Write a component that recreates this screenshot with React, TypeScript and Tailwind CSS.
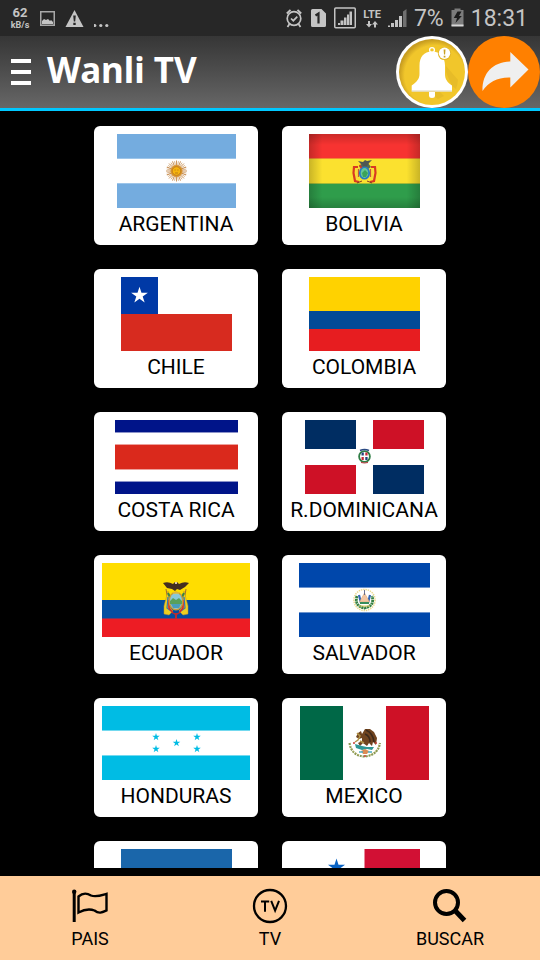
import type { ReactNode } from "react";

type Country = { name: string; width: number; flag: ReactNode };

const starPath =
  "M0 -10 L2.25 -3.09 L9.51 -3.09 L3.63 1.18 L5.88 8.09 L0 3.82 L-5.88 8.09 L-3.63 1.18 L-9.51 -3.09 L-2.25 -3.09 Z";

function Star({ x, y, r, fill }: { x: number; y: number; r: number; fill: string }) {
  return <path d={starPath} fill={fill} transform={`translate(${x} ${y}) scale(${r / 10})`} />;
}

function Triband({ w, color, edge }: { w: number; color: string; edge: string }) {
  return (
    <>
      <rect width={w} height="74" fill="#fff" />
      <rect width={w} height="25" fill={edge} />
      <rect width={w} height="24" fill={color} />
      <rect y="49" width={w} height="25" fill={edge} />
      <rect y="50" width={w} height="24" fill={color} />
    </>
  );
}

const rays = Array.from({ length: 32 }, (_, i) => i * 11.25);

const countries: Country[] = [
  {
    name: "ARGENTINA",
    width: 119,
    flag: (
      <>
        <Triband w={119} color="#74acdf" edge="#9cc5ea" />
        {rays.map((a, i) => (
          <path
            key={a}
            d={i % 2 ? "M0 -4 L0 -10" : "M0 -4 L0 -10.5"}
            stroke={i % 2 ? "#d9b48a" : "#c68a4c"}
            strokeWidth="0.9"
            transform={`translate(59.5 37) rotate(${a})`}
          />
        ))}
        <circle cx="59.5" cy="37" r="6" fill="#d9962f" />
        <circle cx="59.5" cy="37" r="4.3" fill="#f6b40e" stroke="#b5701c" strokeWidth="0.7" />
        <path d="M57.5 36h1.2M60.3 36h1.2M58 39h3" stroke="#a3671a" strokeWidth="0.7" />
      </>
    ),
  },
  {
    name: "BOLIVIA",
    width: 111,
    flag: (
      <>
        <defs>
          <linearGradient id="boSide">
            <stop offset="0" stopOpacity="0.2" />
            <stop offset="0.12" stopOpacity="0" />
            <stop offset="0.88" stopOpacity="0" />
            <stop offset="1" stopOpacity="0.2" />
          </linearGradient>
          <linearGradient id="boTop" x2="0" y2="1">
            <stop offset="0" stopOpacity="0.18" />
            <stop offset="0.15" stopOpacity="0" />
            <stop offset="0.85" stopOpacity="0" />
            <stop offset="1" stopOpacity="0.18" />
          </linearGradient>
        </defs>
        <rect width="111" height="25" fill="#f73331" />
        <rect y="24" width="111" height="26" fill="#fbe12f" />
        <rect y="49" width="111" height="25" fill="#2f9d4b" />
        <path d="M0 24.5h111" stroke="#f08a30" />
        <path d="M0 49.5h111" stroke="#a4b836" />
        <path d="M49 33h-4l-.5 6 1.500 8 4 1M62 33h4l.5 6-1.500 8-4 1" stroke="#d93a22" strokeWidth="2.200" fill="none" />
        <path d="M47.500 35l.5 10M63.500 35l-.5 10" stroke="#f3d743" strokeWidth="1.200" />
        <path d="M49.500 35v8M61.500 35v8" stroke="#c8553a" strokeWidth="1.200" />
        <path d="M50 33l2-3 3 1 4-2 3 4-3 2-6-1z" fill="#566b51" />
        <path d="M49 27l5 1 2-2 2 1 5-1-3 3-2 3-3 1-3-3z" fill="#4f5654" />
        <path d="M53 47l-5 2M58 47l5 2" stroke="#83402a" />
        <ellipse cx="55.5" cy="39" rx="5.6" ry="6.6" fill="#287cc0" />
        <ellipse cx="55.5" cy="39" rx="3.8" ry="5" fill="#66c895" />
        <path d="M53 39l3-3 3 3-2 4h-3z" fill="#3ba359" />
        <path d="M50.5 31l2 3" stroke="#d43228" strokeWidth="1.5" />
        <rect width="111" height="74" fill="url(#boSide)" />
        <rect width="111" height="74" fill="url(#boTop)" />
      </>
    ),
  },
  {
    name: "CHILE",
    width: 111,
    flag: (
      <>
        <rect width="111" height="74" fill="#fff" />
        <rect width="37" height="37" fill="#0039a6" />
        <rect y="37" width="111" height="37" fill="#d72b1f" />
        <Star x={18.5} y={18.5} r={8.8} fill="#fff" />
      </>
    ),
  },
  {
    name: "COLOMBIA",
    width: 111,
    flag: (
      <>
        <rect width="111" height="34" fill="#ffd200" />
        <rect y="34" width="111" height="18" fill="#024a97" />
        <rect y="52" width="111" height="22" fill="#e71d20" />
      </>
    ),
  },
  {
    name: "COSTA RICA",
    width: 123,
    flag: (
      <>
        <rect width="123" height="74" fill="#fff" />
        <rect width="123" height="13" fill="#8c93c9" />
        <rect width="123" height="12" fill="#001489" />
        <rect y="24" width="123" height="26" fill="#eda09b" />
        <rect y="25" width="123" height="24" fill="#da291c" />
        <rect y="61" width="123" height="13" fill="#8c93c9" />
        <rect y="62" width="123" height="12" fill="#001489" />
      </>
    ),
  },
  {
    name: "R.DOMINICANA",
    width: 119,
    flag: (
      <>
        <rect width="119" height="74" fill="#fff" />
        <rect width="51" height="29" fill="#002d62" />
        <rect x="68" width="51" height="29" fill="#ce1126" />
        <rect y="45" width="51" height="29" fill="#ce1126" />
        <rect x="68" y="45" width="51" height="29" fill="#002d62" />
        <circle cx="59.5" cy="36.5" r="5.4" fill="none" stroke="#2f7d45" strokeWidth="1.8" />
        <path d="M55 30.5q4.500-2 9 0" stroke="#2a4a83" strokeWidth="1.5" fill="none" />
        <rect x="56.500" y="33" width="6" height="7" fill="#fff" />
        <path d="M56.500 32.500h2.300v3h-2.300zM60.300 37h2.300v3h-2.300z" fill="#24427c" />
        <path d="M60.300 32.500h2.300v3h-2.300zM56.500 37h2.300v3h-2.300z" fill="#c62737" />
        <path d="M56 42.500q3.500 1 7 0" stroke="#c1343e" fill="none" />
      </>
    ),
  },
  {
    name: "ECUADOR",
    width: 148,
    flag: (
      <>
        <rect width="148" height="37" fill="#ffdd00" />
        <rect y="37" width="148" height="19" fill="#034ea2" />
        <rect y="55" width="148" height="19" fill="#ed1c24" />
        <path d="M0 55.5h148" stroke="#7a3865" />
        <path d="M64 26l4 24M84 26l-4 24" stroke="#a06d30" strokeWidth="1" />
        <path d="M66 28l-4 15 0 8 5 1 4-4-4-5z" fill="#edcf20" stroke="#bd9327" strokeWidth="0.5" />
        <path d="M82 28l4 15 0 8-5 1-4-4 4-5z" fill="#edcf20" stroke="#bd9327" strokeWidth="0.5" />
        <path d="M66 34l-1 11 4 3M82 34l1 11-4 3" stroke="#3275b8" strokeWidth="1.2" fill="none" />
        <path d="M67 37l0 8 4 5M81 37l0 8-4 5" stroke="#d52c2b" strokeWidth="1.6" fill="none" />
        <path d="M66 30l3 6M82 30l-3 6" stroke="#378149" strokeWidth="2" />
        <ellipse cx="74" cy="38" rx="7.5" ry="9.5" fill="#c69b3c" />
        <ellipse cx="74" cy="38" rx="6" ry="8" fill="#8ac8da" />
        <path d="M68 38l3-3 3 2 3-2 3 3v3H68z" fill="#5aa05a" />
        <path d="M69 41h10l-2 4h-6z" fill="#4a9dbb" />
        <path d="M71 30h6" stroke="#e8bf38" strokeWidth="1.5" />
        <path d="M70 50h8l-3 2v4h-2v-4z" fill="#b72d31" />
        <path d="M61 20q5-2 10 1l2-2 2 0 2 2q5-3 10-1l-4 4-5 3-3-1-2 2-3-2-5-1z" fill="#432e21" />
        <path d="M73 19h2v2h-2z" fill="#dfcbb0" />
      </>
    ),
  },
  {
    name: "SALVADOR",
    width: 131,
    flag: (
      <>
        <Triband w={131} color="#0047ab" edge="#6c94ce" />
        <circle cx="65.5" cy="37" r="10.600" fill="none" stroke="#edd98d" strokeWidth="1.500" strokeDasharray="1.400 0.900" />
        <path d="M58 33q-3 10 7.500 12Q76 43 73 33" stroke="#358041" strokeWidth="2.800" fill="none" strokeDasharray="2.200 0.500" />
        <path d="M60 32l2 8M71 32l-2 8" stroke="#3467b5" strokeWidth="2.200" />
        <path d="M65.500 30l5 9h-10z" fill="#f1c5a2" stroke="#d8aa74" strokeWidth="0.600" />
        <path d="M65.500 27v5" stroke="#5a6586" strokeWidth="0.900" />
        <path d="M61 40h9" stroke="#378d5b" strokeWidth="2" />
        <path d="M60 43h11" stroke="#e2ca5c" strokeWidth="1" />
      </>
    ),
  },
  {
    name: "HONDURAS",
    width: 148,
    flag: (
      <>
        <Triband w={148} color="#00bce4" edge="#73d9ef" />
        <Star x={54} y={31} r={4} fill="#00bce4" />
        <Star x={54} y={43} r={4} fill="#00bce4" />
        <Star x={74.5} y={37} r={4} fill="#00bce4" />
        <Star x={95} y={31} r={4} fill="#00bce4" />
        <Star x={95} y={43} r={4} fill="#00bce4" />
      </>
    ),
  },
  {
    name: "MEXICO",
    width: 129,
    flag: (
      <>
        <rect width="129" height="74" fill="#fff" />
        <rect width="43" height="74" fill="#006847" />
        <rect x="86" width="43" height="74" fill="#ce1126" />
        <path d="M49.500 37q2 13 15.500 13.500Q78 49 80 37" stroke="#8a9a55" strokeWidth="2.200" fill="none" strokeDasharray="2 0.900" />
        <path d="M50 40l3 5 6 4M79 40l-3 5-6 4" stroke="#c8b55c" strokeWidth="0.900" fill="none" strokeDasharray="1 2" />
        <path d="M56 31l2-4 3-2 1 3 3-5 5 0 4 3 3 6-1 7-3-3-1 4-3-3-2 3-4-3-3 3-2-3 4-2 0-3-3 1z" fill="#704420" />
        <path d="M66 24q7 3 8 12M65 28q5 2 5 8" stroke="#3d291b" strokeWidth="1.500" fill="none" />
        <path d="M57 27l3 3-2 4-3 2M60 35l4 2" stroke="#b29447" strokeWidth="1.500" fill="none" />
        <path d="M55 38l7 2 5 1 7 0-2 3-5-1-5 1-6-2z" fill="#2f9695" />
        <path d="M61 45l4-2 4 2-2 3h-4z" fill="#db8c55" />
        <path d="M59 46h4M68 46h4" stroke="#48aac0" strokeWidth="1.500" />
        <path d="M53 37h2M75 37h2M64 50h2" stroke="#c63c35" strokeWidth="1.500" />
      </>
    ),
  },
  {
    name: "NICARAGUA",
    width: 111,
    flag: <Triband w={111} color="#1a66aa" edge="#7fa9d0" />,
  },
  {
    name: "PANAMA",
    width: 111,
    flag: (
      <>
        <rect width="111" height="74" fill="#fff" />
        <rect x="55.5" width="55.5" height="37" fill="#d21034" />
        <rect y="37" width="55.5" height="37" fill="#005293" />
        <Star x={27.5} y={18.5} r={9} fill="#0a63c4" />
        <Star x={83} y={55.5} r={9} fill="#d21034" />
      </>
    ),
  },
];

function StatusBar() {
  return (
    <div className="flex h-9 shrink-0 items-center justify-between bg-[#272727] pr-3 pl-2.5 text-[#c4c4c4]">
      <div className="flex items-center gap-2.5">
        <div className="flex w-5 flex-col items-center font-bold">
          <span className="text-[13px] leading-[15px]">62</span>
          <span className="text-[9px] leading-[11px]">kB/s</span>
        </div>
        <svg width="15" height="20" viewBox="0 0 15 20" aria-hidden="true">
          <rect x="0.75" y="3.750" width="13.500" height="13.500" fill="none" stroke="#a8a8a8" strokeWidth="1.500" />
          <path d="M2 16v-3l2-2 2 1 2-1 2 2 1-1 2 2v2z" fill="currentColor" />
        </svg>
        <svg width="19" height="20" viewBox="0 0 19 20" aria-hidden="true">
          <path d="M9.500 2L18.500 19H0.500Z" fill="currentColor" />
          <path d="M8.200 7.500h2.600l-.6 6H8.800zM8.300 14.800h2.400v2.200H8.300z" fill="#272727" />
        </svg>
        <svg width="17" height="20" viewBox="1 0 17 20" fill="currentColor" aria-hidden="true">
          <circle cx="1.800" cy="17.500" r="1.600" />
          <circle cx="7.800" cy="17.500" r="1.600" />
          <circle cx="13.800" cy="17.500" r="1.600" />
        </svg>
      </div>
      <div className="flex items-center gap-[7px]">
        <svg width="17" height="20" viewBox="0 0 17 20" fill="none" stroke="currentColor" aria-hidden="true">
          <circle cx="8" cy="10.500" r="6.800" strokeWidth="1.700" />
          <path d="M0.800 5.500L4.500 1.800M15.200 5.500L11.500 1.800M3.500 16L1.500 19M12.500 16l2 3" strokeWidth="1.800" />
          <path d="M5 10.500l2.300 2.200 4-4" strokeWidth="1.700" />
        </svg>
        <svg width="17" height="20" viewBox="0 0 17 20" aria-hidden="true">
          <path d="M2 1h9.500L16 5.500V17.500a1.500 1.500 0 0 1-1.500 1.500H2.500A1.500 1.500 0 0 1 1 17.500V2.500A1.500 1.500 0 0 1 2.500 1z" fill="currentColor" />
          <path d="M5.500 7.500L8.500 5.500v10" fill="none" stroke="#272727" strokeWidth="2.200" />
        </svg>
        <svg width="22" height="22" viewBox="0 0 22 22" aria-hidden="true">
          <rect x="0.750" y="1" width="20.500" height="19.800" rx="1" fill="none" stroke="currentColor" strokeWidth="1.500" />
          <path d="M4 18v-2h2v2zM6.500 18v-4.500h3v4.500zM10 18v-7.500h2.500V18zM13 18V7.500h2V18zM15.500 18V4.500h2.500V18z" fill="currentColor" />
        </svg>
        <div className="flex flex-col items-center font-bold">
          <span className="text-[11px] leading-3">LTE</span>
          <svg width="12" height="7" viewBox="0 0 12 7" fill="currentColor" aria-hidden="true">
            <path d="M2 0h2v3h2L3 6.500 0 3h2zM8 6.500h2V3.500h2L9 0 6 3.500h2z" />
          </svg>
        </div>
        <svg width="19" height="20" viewBox="0 0 19 20" fill="currentColor" aria-hidden="true">
          <path d="M0 19v-1.500h2V19zM3 19v-4h3v4zM7 19v-7h3v7zM11 19V8h3v11z" />
          <path d="M15 19V3.500L18.500 1v18z" fill="#707070" />
        </svg>
        <span className="pt-[3px] text-[23px]">7%</span>
        <svg width="13" height="20" viewBox="0 0 13 20" aria-hidden="true">
          <path d="M3.500 0.500h6v1.500h3V18H0.500V2h3z" fill="#7c7c7c" />
          <path d="M0.500 16.500h12V18.500H0.500z" fill="#d8d8d8" />
          <path d="M6.500 3.500h4L8 8h2.800L4.500 15 6 10H2.800z" fill="#1c1c1c" />
        </svg>
        <span className="pt-[3px] text-[23px]">18:31</span>
      </div>
    </div>
  );
}

function BellIcon() {
  return (
    <svg className="size-full" viewBox="0 0 72 72" aria-hidden="true">
      <defs>
        <radialGradient id="bellFace" cx="0.54" cy="0.55" r="0.54">
          <stop offset="0.84" stopColor="#f1c62b" />
          <stop offset="1" stopColor="#c89d20" />
        </radialGradient>
      </defs>
      <circle cx="36" cy="36" r="36" fill="#fff" />
      <circle cx="36" cy="36" r="33" fill="url(#bellFace)" />
      <path d="M50 36L56 50 60 53A32 32 0 0 0 62 44L50 30zM39 61l3 2 6-3-4-4H39z" fill="#dcb025" opacity="0.450" />
      <circle cx="36" cy="14" r="2.400" fill="none" stroke="#fff" strokeWidth="1.300" />
      <path d="M36 15.500C28 15.500 23.500 21 23.500 29.500V38c0 5-3 8-7.800 11.500V55.500H56V49.500C51 46 49 43 49 38V29.500C49 21 44 15.500 36 15.500z" fill="#fff" />
      <path d="M15.700 55h40.300" stroke="#d8d3bd" />
      <path d="M33 56h6v3.500a3 2.500 0 0 1-6 0z" fill="#fff" />
      <circle cx="48.500" cy="17.500" r="6.600" fill="#e1b72a" />
      <circle cx="48.500" cy="17.300" r="5.700" fill="#fff" />
      <path d="M47.600 13.500h1.900l-.4 5h-1.100zM47.700 19.700h1.700v1.700h-1.700z" fill="#c8a022" />
    </svg>
  );
}

function ShareIcon() {
  return (
    <svg className="size-full" viewBox="0 0 72 72" aria-hidden="true">
      <circle cx="36" cy="36" r="36" fill="#ff8000" />
      <path d="M42.300 16L60.500 33.500 42.300 51.500V41.500C30 41 20.500 46 14.500 55C14 38 24 26 42.300 25.500z" fill="#efefef" />
    </svg>
  );
}

function AppBar() {
  return (
    <header className="flex h-[75px] shrink-0 items-center border-b-[3px] border-[#00c8ff] bg-linear-to-b from-[#363636] to-[#676767]">
      <button type="button" aria-label="Menu" className="flex h-full flex-col justify-center gap-[7px] pr-4 pl-[11px]">
        <span className="h-1 w-5 bg-white" />
        <span className="h-1 w-5 bg-white" />
        <span className="h-1 w-5 bg-white" />
      </button>
      <h1 className="grow pb-1 font-['Noto_Sans',sans-serif] text-[35px] font-bold text-white">Wanli TV</h1>
      <button type="button" aria-label="Notificaciones" className="size-18">
        <BellIcon />
      </button>
      <button type="button" aria-label="Compartir" className="size-18">
        <ShareIcon />
      </button>
    </header>
  );
}

function CountryCard({ name, width, flag }: Country) {
  return (
    <button type="button" className="flex flex-col items-center rounded-md bg-white pt-2 pb-1 text-black">
      <svg width={width} height="74" viewBox={`0 0 ${width} 74`} aria-hidden="true">
        {flag}
      </svg>
      <span className="text-[21px] leading-[33px]">{name}</span>
    </button>
  );
}

function FlagIcon() {
  return (
    <svg width="36" height="36" viewBox="0 0 36 36" fill="none" stroke="#000" aria-hidden="true">
      <path d="M2.200 4v30" strokeWidth="3" />
      <circle cx="2.200" cy="3.800" r="2.200" fill="#000" stroke="none" />
      <path d="M6.500 8.500C11 4.500 15 5 19 7.500C24 9.500 29 7.500 34.500 5.800V22.500C30 24.500 27 26 22.500 22.500C17.500 20.500 12 21.500 6.500 24.500z" strokeWidth="2.400" />
    </svg>
  );
}

function TvIcon() {
  return (
    <svg width="36" height="36" viewBox="0 0 36 36" aria-hidden="true">
      <circle cx="18" cy="18" r="16" fill="none" stroke="#000" strokeWidth="2.300" />
      <path d="M9 13.500h8.200M13 13.500v10.200M19.200 12.800l3.900 9.700 3.900-9.700" fill="none" stroke="#000" strokeWidth="2" />
    </svg>
  );
}

function SearchIcon() {
  return (
    <svg width="36" height="36" viewBox="0 0 36 36" fill="none" stroke="#000" aria-hidden="true">
      <circle cx="14.500" cy="14.500" r="11.500" strokeWidth="4" />
      <path d="M23 22.500l9.500 10" strokeWidth="5" />
    </svg>
  );
}

const tabs = [
  { label: "PAIS", icon: <FlagIcon /> },
  { label: "TV", icon: <TvIcon /> },
  { label: "BUSCAR", icon: <SearchIcon /> },
];

export default function App() {
  return (
    <div className="flex h-screen flex-col bg-black font-[Roboto,sans-serif]">
      <StatusBar />
      <AppBar />
      <main className="mb-2 min-h-0 grow overflow-y-auto [scrollbar-width:none]">
        <div className="grid grid-cols-[164px_164px] justify-center gap-6 py-[15px]">
          {countries.map((c) => (
            <CountryCard key={c.name} {...c} />
          ))}
        </div>
      </main>
      <nav className="grid shrink-0 grid-cols-3 bg-[#ffcc99] pt-3 pb-1.5 text-black">
        {tabs.map((t) => (
          <button key={t.label} type="button" className="flex flex-col items-center">
            {t.icon}
            <span className="text-lg leading-[30px]">{t.label}</span>
          </button>
        ))}
      </nav>
    </div>
  );
}
